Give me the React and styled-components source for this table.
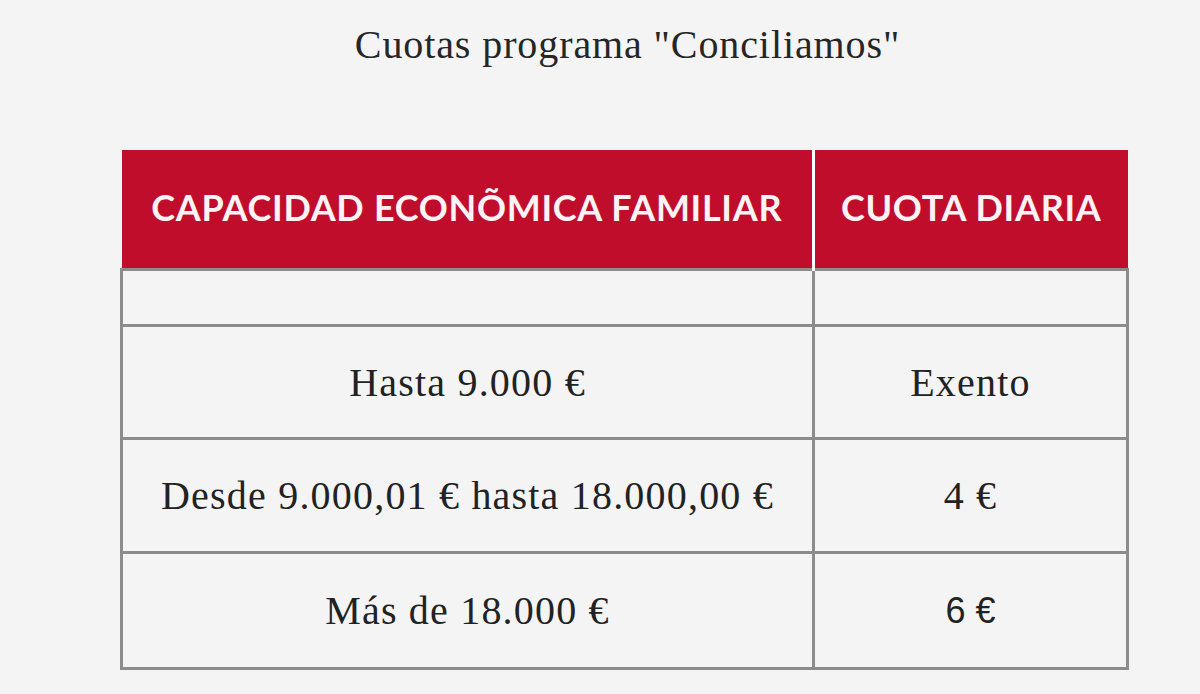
import React from "react";
import styled, { createGlobalStyle } from "styled-components";

const rows = [
  { range: "", fee: "", height: 56 },
  { range: "Hasta 9.000 €", fee: "Exento", height: 113 },
  { range: "Desde 9.000,01 € hasta 18.000,00 €", fee: "4 €", height: 114 },
  { range: "Más de 18.000 €", fee: "6 €", height: 116, sans: true },
];

export default function App() {
  return (
    <>
      <GlobalStyle />
      <Page>
        <Title>Cuotas programa "Conciliamos"</Title>
        <FeeTable>
          <colgroup>
            <col style={{ width: 692 }} />
            <col />
          </colgroup>
          <thead>
            <tr>
              <HeadCell>CAPACIDAD ECONÕMICA FAMILIAR</HeadCell>
              <HeadCell $last>CUOTA DIARIA</HeadCell>
            </tr>
          </thead>
          <tbody>
            {rows.map((r, i) => (
              <Row key={i} $height={r.height}>
                <Cell>{r.range}</Cell>
                <Cell $sans={r.sans}>{r.fee}</Cell>
              </Row>
            ))}
          </tbody>
        </FeeTable>
      </Page>
    </>
  );
}

/* ---------------- Styled Components ---------------- */

const GlobalStyle = createGlobalStyle`
  html, body {
    margin: 0;
    padding: 0;
    background: #f4f4f4;
  }
`;

const Page = styled.div`
  display: flex;
  flex-direction: column;
  align-items: center;
  padding: 20px 0 0 49px;
  min-height: 694px;
  box-sizing: border-box;
  background: #f4f4f4;
`;

const Title = styled.h1`
  margin: 0 0 0 6px;
  font-family: "Liberation Serif", serif;
  font-weight: normal;
  font-size: 40px;
  line-height: 50px;
  letter-spacing: 0.9px;
  color: #262626;
`;

const FeeTable = styled.table`
  width: 1009px;
  margin-top: 80px;
  border-collapse: collapse;
  table-layout: fixed;
`;

const HeadCell = styled.th`
  height: 114px;
  padding: 0 0 4px;
  background: #c10d2c;
  color: #fdf3f4;
  font-family: Lato, "Open Sans", sans-serif;
  font-weight: 700;
  font-size: 36px;
  letter-spacing: 0.7px;
  text-align: center;
  border-right: ${(p) => (p.$last ? "none" : "3px solid #ffffff")};
`;

const Row = styled.tr`
  height: ${(p) => p.$height}px;
`;

const Cell = styled.td`
  padding: 0;
  border: 3px solid #8c8c8c;
  text-align: center;
  font-family: ${(p) =>
    p.$sans ? `"Liberation Sans", Arial, sans-serif` : `"Liberation Serif", serif`};
  font-size: ${(p) => (p.$sans ? "36px" : "40px")};
  letter-spacing: ${(p) => (p.$sans ? "0" : "1.2px")};
  color: #222;
`;
